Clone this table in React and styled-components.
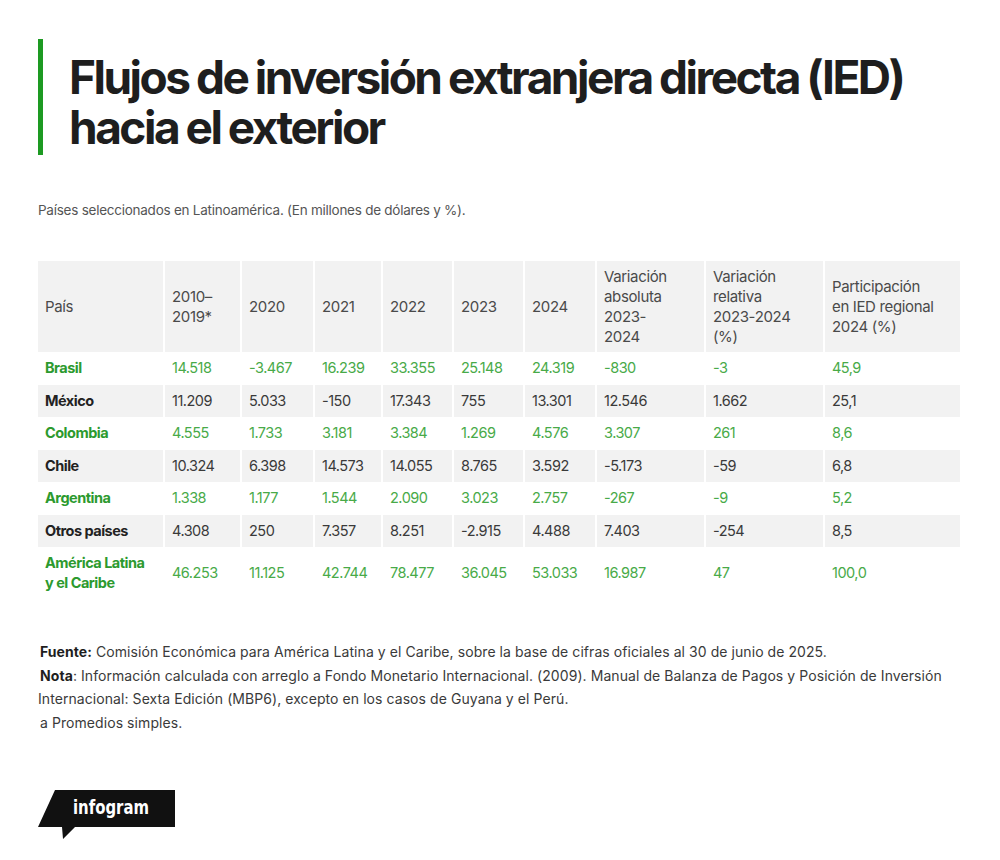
import React from 'react';
import styled, { createGlobalStyle } from 'styled-components';

const GlobalStyle = createGlobalStyle`
  body {
    margin: 0;
    background: #ffffff;
    font-family: 'Inter', 'Liberation Sans', sans-serif;
  }
`;

const Page = styled.div`
  width: 1000px;
  height: 860px;
  box-sizing: border-box;
  padding: 39px 40px 0 38px;
  background: #fff;
`;

const Header = styled.div`
  display: flex;
  gap: 26px;
`;

const GreenBar = styled.div`
  width: 5px;
  height: 116px;
  flex-shrink: 0;
  background: #1d9a22;
`;

const Title = styled.h1`
  margin: 13px 0 0;
  font-size: 46px;
  line-height: 50px;
  font-weight: 700;
  letter-spacing: -2.5px;
  word-spacing: -1px;
  color: #1e1e1e;
`;

const TitleLine = styled.span`
  display: block;
  height: 50px;
`;

const Subtitle = styled.p`
  margin: 47px 0 0;
  font-size: 13.5px;
  letter-spacing: -0.25px;
  color: #555;
`;

const Table = styled.div`
  margin-top: 43px;
  width: 922px;
`;

const Row = styled.div`
  display: grid;
  grid-template-columns: 125px 75px 71px 66px 69px 69px 70px 107px 117px 135px;
  column-gap: 2px;
  height: ${(p) => p.h}px;
`;

const Cell = styled.div`
  display: flex;
  align-items: center;
  padding-left: 7px;
  background: ${(p) => (p.shade ? '#f2f2f2' : '#fff')};
  font-size: 14.5px;
  line-height: 20px;
  letter-spacing: -0.5px;
  color: ${(p) => (p.green ? '#48aa48' : '#3a3a3a')};
`;

const HeadCell = styled(Cell)`
  color: #4a4a4a;
  font-size: 15px;
  letter-spacing: -0.35px;
`;

const NameCell = styled(Cell)`
  font-weight: 700;
  color: ${(p) => (p.green ? '#2c9a2e' : '#222')};
`;

const Notes = styled.div`
  margin-top: 41px;
  padding-left: 2px;
  font-size: 14px;
  line-height: 23.5px;
  letter-spacing: 0.07px;
  color: #3a3a3a;
`;

const Line = styled.div`
  margin-left: ${(p) => p.indent || 0}px;
`;

const Strong = styled.b`
  color: #1e1e1e;
`;

const Logo = styled.svg`
  display: block;
  margin-top: 56px;
`;

const headers = [
  'País',
  ['2010–', '2019*'],
  '2020',
  '2021',
  '2022',
  '2023',
  '2024',
  ['Variación', 'absoluta', '2023-', '2024'],
  ['Variación', 'relativa', '2023-2024', '(%)'],
  ['Participación', 'en IED regional', '2024 (%)'],
];

const rows = [
  { name: 'Brasil', green: true, v: ['14.518', '-3.467', '16.239', '33.355', '25.148', '24.319', '-830', '-3', '45,9'] },
  { name: 'México', v: ['11.209', '5.033', '-150', '17.343', '755', '13.301', '12.546', '1.662', '25,1'] },
  { name: 'Colombia', green: true, v: ['4.555', '1.733', '3.181', '3.384', '1.269', '4.576', '3.307', '261', '8,6'] },
  { name: 'Chile', v: ['10.324', '6.398', '14.573', '14.055', '8.765', '3.592', '-5.173', '-59', '6,8'] },
  { name: 'Argentina', green: true, v: ['1.338', '1.177', '1.544', '2.090', '3.023', '2.757', '-267', '-9', '5,2'] },
  { name: 'Otros países', v: ['4.308', '250', '7.357', '8.251', '-2.915', '4.488', '7.403', '-254', '8,5'] },
  { name: ['América Latina', 'y el Caribe'], green: true, tall: true, v: ['46.253', '11.125', '42.744', '78.477', '36.045', '53.033', '16.987', '47', '100,0'] },
];

const lines = (t) => (Array.isArray(t) ? t.map((s, i) => <React.Fragment key={i}>{i > 0 && <br />}{s}</React.Fragment>) : t);

export default function App() {
  return (
    <Page>
      <GlobalStyle />
      <Header>
        <GreenBar />
        <Title>
          <TitleLine>Flujos de inversión extranjera directa (IED)</TitleLine>
          <TitleLine>hacia el exterior</TitleLine>
        </Title>
      </Header>
      <Subtitle>Países seleccionados en Latinoamérica. (En millones de dólares y %).</Subtitle>

      <Table>
        <Row h={91}>
          {headers.map((h, i) => (
            <HeadCell key={i} shade>
              <div>{lines(h)}</div>
            </HeadCell>
          ))}
        </Row>
        {rows.map((r, i) => {
          const shade = !r.green;
          return (
            <Row key={i} h={r.tall ? 52 : 32.5}>
              <NameCell shade={shade} green={r.green}>
                <div>{lines(r.name)}</div>
              </NameCell>
              {r.v.map((val, j) => (
                <Cell key={j} shade={shade} green={r.green}>
                  {val}
                </Cell>
              ))}
            </Row>
          );
        })}
      </Table>

      <Notes>
        <Line>
          <Strong>Fuente:</Strong> Comisión Económica para América Latina y el Caribe, sobre la base de cifras oficiales al 30 de junio de 2025.
        </Line>
        <Line>
          <Strong>Nota</Strong>: Información calculada con arreglo a Fondo Monetario Internacional. (2009). Manual de Balanza de Pagos y Posición de Inversión
        </Line>
        <Line indent={-2}>Internacional: Sexta Edición (MBP6), excepto en los casos de Guyana y el Perú.</Line>
        <Line>a Promedios simples.</Line>
      </Notes>

      <Logo width="140" height="50" viewBox="0 0 140 50">
        <polygon points="17,0 137,0 137,37 37,37 25,49 24,37 0,37" fill="#111" />
        <text
          x="35"
          y="24"
          fill="#fff"
          fontFamily="'DejaVu Sans', sans-serif"
          fontWeight="700"
          fontSize="19"
          textLength="76"
          lengthAdjust="spacingAndGlyphs"
        >
          infogram
        </text>
      </Logo>
    </Page>
  );
}
